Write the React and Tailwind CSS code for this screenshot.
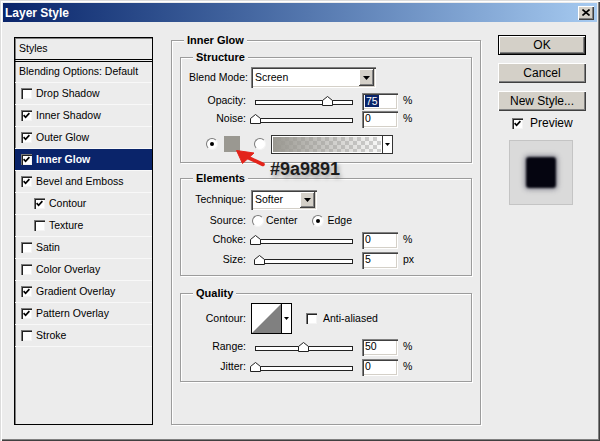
import React from 'react';

const styleList = [
  { name: 'Drop Shadow', on: false },
  { name: 'Inner Shadow', on: true },
  { name: 'Outer Glow', on: true },
  { name: 'Inner Glow', on: true, active: true },
  { name: 'Bevel and Emboss', on: true },
  { name: 'Contour', on: true, sub: true },
  { name: 'Texture', on: false, sub: true },
  { name: 'Satin', on: false },
  { name: 'Color Overlay', on: false },
  { name: 'Gradient Overlay', on: true },
  { name: 'Pattern Overlay', on: true },
  { name: 'Stroke', on: false },
];

function Check({ on }) {
  return (
    <span className="flex h-[11px] w-[11px] shrink-0 items-center justify-center bg-white shadow-[inset_1px_1px_0_#7a7a7a,inset_2px_2px_0_#222,inset_-1px_-1px_0_#f4f4f4]">
      {on && (
        <svg width="7" height="7" viewBox="0 0 7 7">
          <path d="M0.6 3.2 L2.6 5.3 L6.4 1.1" fill="none" stroke="#000" strokeWidth="1.7" />
        </svg>
      )}
    </span>
  );
}

function Radio({ on }) {
  return (
    <span className="flex h-[12px] w-[12px] shrink-0 items-center justify-center rounded-full border border-[#7a7a7a] border-b-[#f4f4f4] border-r-[#f4f4f4] bg-white">
      {on && <span className="h-[4px] w-[4px] rounded-full bg-black" />}
    </span>
  );
}

function Arrow() {
  return (
    <svg width="7" height="4" viewBox="0 0 7 4">
      <path d="M0 0H7L3.5 4Z" fill="#000" />
    </svg>
  );
}

function Select({ value, className }) {
  return (
    <div className={`flex bg-white p-[2px] shadow-[inset_1px_1px_0_#808080,inset_2px_2px_0_#404040,inset_-1px_-1px_0_#fff,inset_-2px_-2px_0_#d4d0c8] ${className}`}>
      <span className="flex flex-1 items-center pl-[2px]">{value}</span>
      <span className="flex w-[15px] items-center justify-center bg-[#d4d0c8] shadow-[inset_-1px_-1px_0_#404040,inset_1px_1px_0_#fff,inset_-2px_-2px_0_#808080]">
        <Arrow />
      </span>
    </div>
  );
}

function Slider({ value, max = 100 }) {
  const left = (value / max) * 97 - 5.5;
  return (
    <div className="relative ml-[4px] h-[10px] w-[98px] shrink-0">
      <div className="mt-[4px] h-[5px] border border-[#222] bg-white" />
      <svg className="absolute top-0" style={{ left }} width="11" height="10" viewBox="0 0 11 10">
        <path d="M0.5 9.5V4.5L5.5 0.5L10.5 4.5V9.5Z" fill="#fff" stroke="#222" />
      </svg>
    </div>
  );
}

function Field({ value, selected }) {
  return (
    <div className="ml-[9px] flex h-[17px] w-[36px] shrink-0 items-center bg-white pl-[3px] shadow-[inset_1px_1px_0_#808080,inset_2px_2px_0_#404040,inset_-1px_-1px_0_#fff,inset_-2px_-2px_0_#d4d0c8]">
      <span className={selected ? 'bg-[#0a246a] px-[1px] leading-[12px] text-white' : ''}>{value}</span>
    </div>
  );
}

function Row({ label, className, children }) {
  return (
    <div className={`flex items-center ${className}`}>
      <span className="w-[62px] shrink-0 whitespace-nowrap pr-[5px] text-right">{label}</span>
      {children}
    </div>
  );
}

function SliderRow({ label, value, max, unit, selected, className }) {
  return (
    <Row label={label} className={`h-[18px] ${className}`}>
      <Slider value={value} max={max} />
      <Field value={value} selected={selected} />
      <span className="ml-[5px]">{unit}</span>
    </Row>
  );
}

function Group({ title, className, children }) {
  return (
    <div className={`border border-[#9c9c9c] px-[8px] shadow-[1px_1px_0_#fff,inset_1px_1px_0_#fff] ${className}`}>
      <span className="-mt-[8px] ml-[4px] block w-fit bg-[#ececec] px-[3px] text-[11px] font-bold leading-[14px]">
        {title}
      </span>
      {children}
    </div>
  );
}

function Button({ children, primary }) {
  return (
    <div className={`flex h-[20px] w-[88px] items-center justify-center bg-[#d4d0c8] text-[12px] ${primary ? 'shadow-[inset_0_0_0_1px_#000,inset_2px_2px_0_#fff,inset_-2px_-2px_0_#404040,inset_-3px_-3px_0_#808080]' : 'shadow-[inset_1px_1px_0_#fff,inset_-1px_-1px_0_#404040,inset_-2px_-2px_0_#808080]'}`}>
      {children}
    </div>
  );
}

export default function App() {
  return (
    <div className="flex h-[441px] w-[600px] flex-col bg-[#ececec] p-[3px] font-['Liberation_Sans',Arial,sans-serif] text-[10.5px] text-black shadow-[inset_1px_1px_0_#dcdcdc,inset_2px_2px_0_#fff,inset_-1px_-1px_0_#404040,inset_-2px_-2px_0_#808080]">
      {/* title bar */}
      <div className="flex h-[19px] shrink-0 items-center justify-between bg-linear-to-r from-[#0a246a] to-[#a6caf0] pl-[2px] pr-[3px]">
        <span className="text-[12px] font-bold text-white">Layer Style</span>
        <span className="flex h-[14px] w-[16px] items-center justify-center bg-[#d4d0c8] shadow-[inset_1px_1px_0_#fff,inset_-1px_-1px_0_#404040,inset_-2px_-2px_0_#808080]">
          <svg width="8" height="7" viewBox="0 0 8 7">
            <path d="M0.5 0.5L7.5 6.5M7.5 0.5L0.5 6.5" stroke="#000" strokeWidth="1.6" />
          </svg>
        </span>
      </div>

      <div className="flex items-start">
        {/* styles list */}
        <div className="ml-[11px] mt-[15px] h-[388px] w-[139px] shrink-0 border border-black shadow-[inset_1px_1px_0_#808080]">
          <div className="flex h-[22px] items-center border-b border-black pl-[4px]">Styles</div>
          <div className="h-[1px]" />
          <div className="flex h-[22px] items-center border-y border-black border-b-[#f8f8f8] pl-[4px]">
            Blending Options: Default
          </div>
          {styleList.map((s) => (
            <div
              key={s.name}
              className={`flex h-[22px] items-center gap-[4px] border-b border-[#f8f8f8] ${s.sub ? 'pl-[19px]' : 'pl-[6px]'} ${s.active ? 'bg-[#0a246a] font-bold text-white' : ''}`}
            >
              <Check on={s.on} />
              <span>{s.name}</span>
            </div>
          ))}
        </div>

        {/* settings */}
        <Group title="Inner Glow" className="ml-[18px] mt-[18px] h-[385px] w-[310px] shrink-0">
          <Group title="Structure" className="mt-[10px] pb-[8px]">
            <Row label="Blend Mode:" className="mt-[3px] h-[21px]">
              <Select value="Screen" className="h-[21px] w-[125px]" />
            </Row>
            <SliderRow label="Opacity:" value={75} unit="%" selected className="mt-[4px]" />
            <SliderRow label="Noise:" value={0} unit="%" />
            <div className="relative mt-[6px] flex h-[20px] items-center">
              <span className="ml-[17px]"><Radio on /></span>
              <span className="ml-[6px] h-[16px] w-[16px] bg-[#9a9891]" />
              <span className="ml-[14px]"><Radio /></span>
              <div className="ml-[5px] flex h-[19px] w-[122px] border border-[#333]">
                <div className="flex-1 border border-white [background:linear-gradient(to_right,#9a9891,rgba(154,152,145,0.05)),repeating-conic-gradient(#d2d2d2_0_25%,#fff_0_50%)_0_0/8px_8px]" />
                <div className="flex w-[10px] items-center justify-center border-l border-[#333] bg-white">
                  <svg width="5" height="3" viewBox="0 0 5 3"><path d="M0 0H5L2.5 3Z" fill="#000" /></svg>
                </div>
              </div>
              {/* red pointer to the swatch */}
              <svg className="absolute left-[46px] top-[15px]" width="32" height="20" viewBox="0 0 32 20">
                <path d="M28 15.5L12 8" stroke="#e3241b" strokeWidth="3.6" strokeLinecap="round" />
                <path d="M1.5 1.5L19 4L7.5 14.5Z" fill="#e3241b" stroke="#e3241b" strokeLinejoin="round" />
              </svg>
              <span className="absolute left-[81px] top-[26px] text-[18px] font-bold leading-[18px] text-[#1c1c1c] [text-shadow:2px_3px_4px_rgba(0,0,0,0.35)]">
                #9a9891
              </span>
            </div>
          </Group>

          <Group title="Elements" className="mt-[15px] pb-[6px]">
            <Row label="Technique:" className="mt-[5px] h-[20px]">
              <Select value="Softer" className="h-[20px] w-[66px]" />
            </Row>
            <Row label="Source:" className="mt-[2px] h-[18px]">
              <span className="ml-[1px]"><Radio /></span>
              <span className="ml-[2px]">Center</span>
              <span className="ml-[14px]"><Radio on /></span>
              <span className="ml-[4px]">Edge</span>
            </Row>
            <SliderRow label="Choke:" value={0} unit="%" className="mt-[1px]" />
            <SliderRow label="Size:" value={5} max={120} unit="px" className="mt-[2px]" />
          </Group>

          <Group title="Quality" className="mt-[17px] pb-[5px]">
            <Row label="Contour:" className="mt-[3px] h-[31px]">
              <div className="flex h-[31px] w-[41px] border border-black bg-white">
                <svg className="flex-1" viewBox="0 0 29 29" preserveAspectRatio="none">
                  <path d="M0 29L29 0V29Z" fill="#808080" />
                </svg>
                <div className="flex w-[10px] items-center justify-center border-l border-black">
                  <svg width="5" height="3" viewBox="0 0 5 3"><path d="M0 0H5L2.5 3Z" fill="#000" /></svg>
                </div>
              </div>
              <span className="ml-[14px]"><Check /></span>
              <span className="ml-[6px]">Anti-aliased</span>
            </Row>
            <SliderRow label="Range:" value={50} unit="%" className="mt-[4px]" />
            <SliderRow label="Jitter:" value={0} unit="%" className="mt-[2px]" />
          </Group>
        </Group>

        {/* buttons and preview */}
        <div className="ml-[17px] mt-[13px] flex w-[88px] flex-col gap-[8px]">
          <Button primary>OK</Button>
          <Button>Cancel</Button>
          <Button>New Style...</Button>
          <div className="-mt-[6px] flex h-[20px] items-center pl-[14px] text-[12px]">
            <Check on />
            <span className="ml-[7px]">Preview</span>
          </div>
          <div className="-mt-[1px] ml-[11px] flex h-[65px] w-[64px] items-center justify-center border border-[#c4c4c4] bg-[#dadada]">
            <div className="h-[31px] w-[30px] rounded-[3px] bg-[#050510] shadow-[0_0_4px_2px_rgba(80,80,100,0.5)] blur-[1px]" />
          </div>
        </div>
      </div>
    </div>
  );
}
